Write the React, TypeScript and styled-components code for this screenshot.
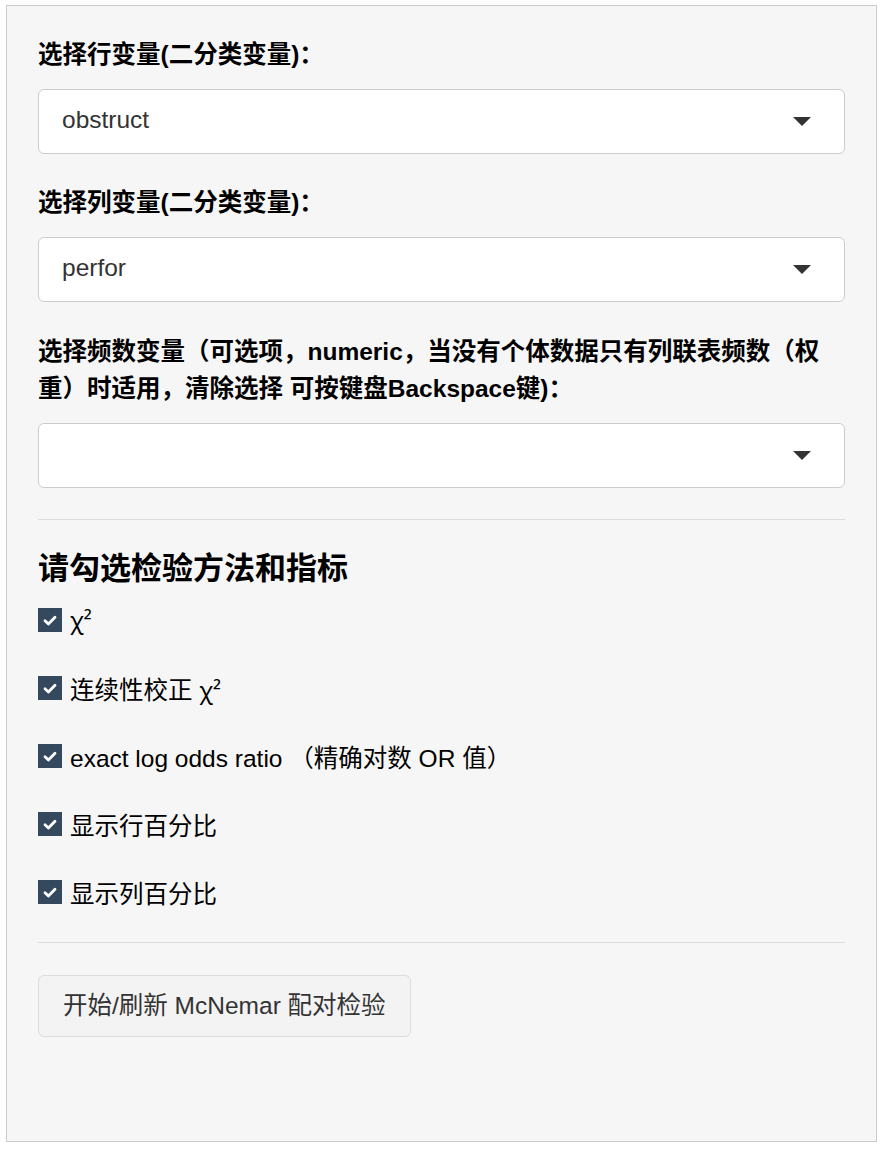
import React from 'react';
import styled, { createGlobalStyle } from 'styled-components';

const GlobalStyle = createGlobalStyle`
    html, body {
        margin: 0;
        padding: 0;
        background: #ffffff;
    }
    body {
        font-family: "Liberation Sans", Arial, "Noto Sans CJK SC", sans-serif;
        color: #333333;
    }
`;

const Page = styled.div`
    padding: 5px 9px 8px 6px;
`;

const Well = styled.div`
    background: #f6f6f6;
    border: 1px solid #cccccc;
    padding: 31px 31px 104px 31px;
    min-height: 1000px;
`;

const FormGroup = styled.div`
    margin-bottom: 31px;
`;

const Label = styled.div<{ $lh?: number }>`
    font-size: 24.5px;
    font-weight: bold;
    color: #000000;
    line-height: ${props => props.$lh || 36}px;
    margin-bottom: 16px;
`;

const SelectBox = styled.div`
    display: flex;
    align-items: center;
    justify-content: space-between;
    height: 65px;
    box-sizing: border-box;
    padding: 0 33px 4px 23px;
    background: #ffffff;
    border: 1px solid #cccccc;
    border-radius: 6px;
    font-size: 24.5px;
    color: #333333;
`;

const Arrow = styled.span`
    width: 0;
    height: 0;
    margin-top: 4px;
    border-left: 9px solid transparent;
    border-right: 9px solid transparent;
    border-top: 9px solid #333333;
`;

const Rule = styled.hr<{ $mb?: number }>`
    border: 0;
    border-top: 1px solid #dddddd;
    margin: 0 0 ${props => props.$mb ?? 29}px 0;
`;

const Heading = styled.h4`
    font-size: 31px;
    font-weight: bold;
    color: #000000;
    line-height: 40px;
    margin: 0 0 14px 0;
`;

const CheckList = styled.div`
    display: flex;
    flex-direction: column;
    gap: 34px;
    margin-bottom: 33px;
`;

const CheckRow = styled.label`
    display: flex;
    align-items: center;
    gap: 8px;
    height: 34px;
    font-size: 24.5px;
    color: #000000;
`;

const Box = styled.span`
    width: 24px;
    height: 24px;
    background: #34495e;
    display: flex;
    align-items: center;
    justify-content: center;
    flex-shrink: 0;
`;

const Chi = styled.span`
    font-family: "Noto Sans", "DejaVu Sans", sans-serif;
    font-size: 23px;
`;

const Button = styled.button`
    margin-top: 32px;
    height: 62px;
    padding: 0 24px 5px 24px;
    background: #f3f3f3;
    border: 1px solid #dddddd;
    border-radius: 6px;
    font-family: "Liberation Sans", Arial, "Noto Sans CJK SC", sans-serif;
    font-size: 24.5px;
    color: #333333;
`;

const checks: React.ReactNode[] = [
    <Chi>χ²</Chi>,
    <>连续性校正 <Chi>χ²</Chi></>,
    <>exact log odds ratio （精确对数 OR 值）</>,
    <>显示行百分比</>,
    <>显示列百分比</>,
];

function Check() {
    return (
        <Box>
            <svg width="14" height="11" viewBox="0 0 14 11">
                <path d="M2 5.8 L5.4 9 L12 2.2" fill="none" stroke="#fff" strokeWidth="2.8" strokeLinecap="round" strokeLinejoin="round" />
            </svg>
        </Box>
    );
}

export default function App() {
    return (
        <Page>
            <GlobalStyle />
            <Well>
                <FormGroup>
                    <Label>选择行变量(二分类变量)：</Label>
                    <SelectBox>obstruct<Arrow /></SelectBox>
                </FormGroup>
                <FormGroup>
                    <Label>选择列变量(二分类变量)：</Label>
                    <SelectBox>perfor<Arrow /></SelectBox>
                </FormGroup>
                <FormGroup>
                    <Label $lh={37}>选择频数变量（可选项，numeric，当没有个体数据只有列联表频数（权重）时适用，清除选择 可按键盘Backspace键)：</Label>
                    <SelectBox><span /><Arrow /></SelectBox>
                </FormGroup>
                <Rule />
                <Heading>请勾选检验方法和指标</Heading>
                <CheckList>
                    {checks.map((c, i) => (
                        <CheckRow key={i}>
                            <Check />
                            <span>{c}</span>
                        </CheckRow>
                    ))}
                </CheckList>
                <Rule $mb={0} />
                <Button>开始/刷新 McNemar 配对检验</Button>
            </Well>
        </Page>
    );
}
